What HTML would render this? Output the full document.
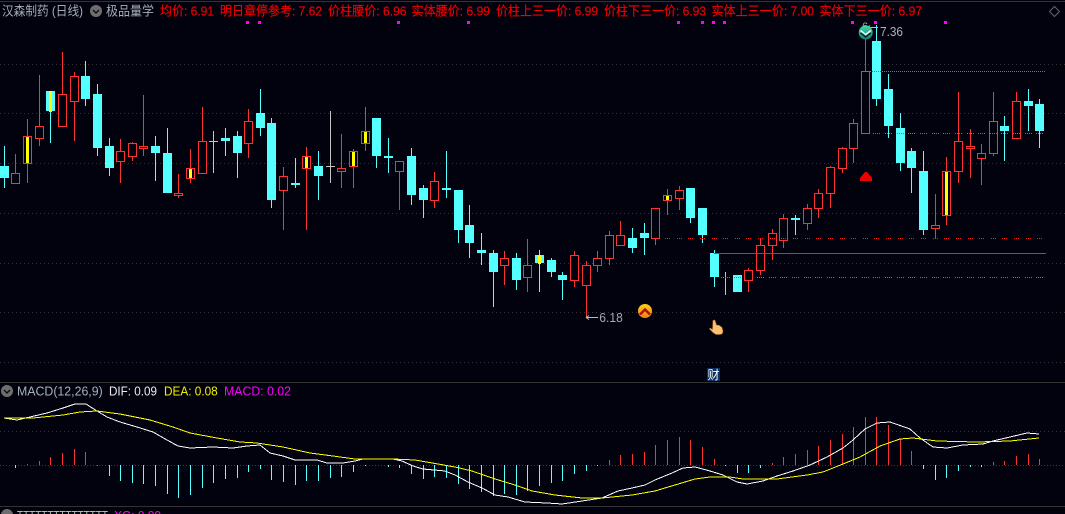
<!DOCTYPE html>
<html><head><meta charset="utf-8"><title>K</title>
<style>
html,body{margin:0;padding:0;background:#02020e;width:1065px;height:514px;overflow:hidden}
svg{display:block;position:absolute;left:0;top:0}
text{font-family:"Liberation Sans","Noto Sans CJK SC",sans-serif;font-size:13px}
</style></head><body>
<svg width="1065" height="514" viewBox="0 0 1065 514" xmlns="http://www.w3.org/2000/svg">
<defs>
<linearGradient id="gg" x1="0" y1="0" x2="0" y2="1"><stop offset="0" stop-color="#45d8a8"/><stop offset="1" stop-color="#15807c"/></linearGradient>
<linearGradient id="yy" x1="0" y1="0" x2="0" y2="1"><stop offset="0" stop-color="#fbd020"/><stop offset="1" stop-color="#f08010"/></linearGradient>
</defs>
<rect width="1065" height="514" fill="#02020e"/>
<g shape-rendering="crispEdges" fill="none">
<path d="M0 1.5H1065M0 382.5H1065M0 506.5H1065" stroke="#333"/>
<path d="M0 64.5H1065M0 113.5H1065M0 163.5H1065M0 213.5H1065M0 263.5H1065M0 312.5H1065M0 362.5H1065M0 431.5H1065" stroke="#343434" stroke-dasharray="1 3"/>
<!-- red wicks -->
<path stroke="#ff3232" d="M15.5 154V184M27.5 119V183M39.5 75V146M62.5 52V127M74.5 72V141M120.5 139V183M132.5 142V161M143.5 95V156M178.5 174V198M190.5 149V183M202.5 107V174M248.5 109V158M283.5 167V230M306.5 147V230M341.5 134V188M353.5 149V188M365.5 107V151M399.5 161V210M434.5 172V208M504.5 251V285M527.5 239V292M574.5 251V287M586.5 261V317M597.5 251V272M609.5 231V265M620.5 221V246M655.5 208V245M667.5 189V215M679.5 186V210M748.5 268V292M760.5 239V275M772.5 229V260M783.5 214V248M807.5 204V230M818.5 189V218M830.5 166V208M842.5 147V173M853.5 119V163M865.5 27V134M935.5 194V238M946.5 157V225M958.5 92V183M970.5 129V178M981.5 144V185M993.5 92V156M1016.5 92V139"/>
<!-- red bodies -->
<path stroke="#ff3232" fill="#02020e" d="M11.5 173.5h8v10h-8zM23.5 136.5h8v27h-8zM35.5 126.5h8v12h-8zM58.5 94.5h8v32h-8zM70.5 76.5h8v25h-8zM116.5 151.5h8v10h-8zM128.5 143.5h8v13h-8zM139.5 146.5h8v2h-8zM174.5 193.5h8v2h-8zM186.5 168.5h8v10h-8zM198.5 141.5h8v32h-8zM244.5 121.5h8v22h-8zM279.5 176.5h8v14h-8zM302.5 156.5h8v12h-8zM337.5 168.5h8v3h-8zM349.5 151.5h8v15h-8zM361.5 131.5h8v12h-8zM395.5 161.5h8v10h-8zM430.5 181.5h8v19h-8zM500.5 258.5h8v7h-8zM523.5 265.5h8v12h-8zM570.5 255.5h8v25h-8zM582.5 265.5h8v20h-8zM593.5 258.5h8v7h-8zM605.5 235.5h8v23h-8zM616.5 235.5h8v10h-8zM651.5 208.5h8v30h-8zM663.5 195.5h8v5h-8zM675.5 190.5h8v8h-8zM744.5 270.5h8v10h-8zM756.5 245.5h8v25h-8zM768.5 233.5h8v12h-8zM779.5 218.5h8v22h-8zM803.5 208.5h8v15h-8zM814.5 193.5h8v15h-8zM826.5 167.5h8v26h-8zM838.5 148.5h8v20h-8zM849.5 123.5h8v25h-8zM861.5 71.5h8v62h-8zM931.5 225.5h8v3h-8zM942.5 171.5h8v44h-8zM954.5 141.5h8v30h-8zM966.5 146.5h8v2h-8zM977.5 153.5h8v5h-8zM989.5 121.5h8v32h-8zM1012.5 101.5h8v37h-8z"/>
<!-- cyan wicks -->
<path stroke="#54ffff" d="M4.5 146V188M50.5 91V143M85.5 61V106M97.5 84V156M109.5 138V176M155.5 136V181M167.5 128V193M225.5 128V156M237.5 131V178M260.5 89V136M271.5 118V208M295.5 158V188M318.5 151V200M376.5 118V168M388.5 138V173M411.5 148V205M423.5 185V218M446.5 151V198M458.5 190V243M469.5 205V258M481.5 233V265M493.5 250V307M516.5 253V290M539.5 250V292M551.5 258V277M562.5 272V300M632.5 228V253M644.5 223V255M690.5 188V223M702.5 208V243M714.5 250V287M737.5 275V292M795.5 215V235M876.5 25V106M888.5 74V138M900.5 113V171M911.5 148V193M923.5 151V235M1004.5 116V161M1028.5 89V131M1039.5 99V148"/>
<!-- cyan bodies -->
<path fill="#54ffff" d="M0 166h9v12h-9zM46 91h9v20h-9zM81 76h9v23h-9zM93 94h9v54h-9zM105 146h9v22h-9zM151 146h9v7h-9zM163 153h9v40h-9zM221 138h9v3h-9zM233 136h9v17h-9zM256 113h9v15h-9zM267 123h9v77h-9zM291 183h9v2h-9zM314 166h9v10h-9zM372 118h9v38h-9zM384 156h9v2h-9zM407 156h9v39h-9zM419 188h9v12h-9zM442 188h9v2h-9zM454 190h9v40h-9zM465 225h9v18h-9zM477 250h9v3h-9zM489 253h9v19h-9zM512 258h9v22h-9zM535 255h9v8h-9zM547 260h9v12h-9zM558 275h9v5h-9zM628 238h9v10h-9zM640 233h9v5h-9zM686 188h9v30h-9zM698 208h9v27h-9zM710 253h9v24h-9zM733 275h9v17h-9zM791 218h9v2h-9zM872 41h9v58h-9zM884 89h9v37h-9zM896 128h9v35h-9zM907 151h9v17h-9zM919 171h9v59h-9zM1000 126h9v5h-9zM1024 101h9v5h-9zM1035 104h9v27h-9z"/>
<!-- gray doji -->
<path stroke="#c4c4c4" d="M213.5 131V173M209 141.5H218M330.5 111V183M326 166.5H335M725.5 272V295"/>
<!-- yellow -->
<path fill="#ffff00" d="M26 137h3v26h-3zM49 91h3v21h-3zM189 169h3v9h-3zM305 157h3v11h-3zM352 152h3v14h-3zM364 132h3v11h-3zM538 255h3v9h-3zM666 196h3v4h-3zM945 172h3v43h-3z"/>
<!-- overlay lines -->
<path stroke="#f020f0" stroke-dasharray="1 1" d="M866 71.5H1046"/>
<path stroke="#f020f0" stroke-dasharray="1 1" d="M873 133.500h7M885 133.500h7M897 133.500h7M908 133.500h7M920 133.500h7M932 133.500h7M943 133.500h7M955 133.500h7M967 133.500h7M978 133.500h7M990 133.500h7M1001 133.500h7M1013 133.500h7M1025 133.500h7M1036 133.500h7"/>
<path stroke="#ff2020" stroke-dasharray="1 1" d="M665 238.500h5M677 238.500h5M688 238.500h5M700 238.500h5M712 238.500h5M723 238.500h5M735 238.500h5M746 238.500h5M758 238.500h5M770 238.500h5M781 238.500h5M793 238.500h5M805 238.500h5M816 238.500h5M828 238.500h5M840 238.500h5M851 238.500h5M863 238.500h5M874 238.500h5M886 238.500h5M898 238.500h5M909 238.500h5M921 238.500h5M933 238.500h5M944 238.500h5M956 238.500h5M968 238.500h5M979 238.500h5M991 238.500h5M1002 238.500h5M1014 238.500h5M1026 238.500h5M1037 238.500h5"/>
<path stroke="#0e8080" d="M714 253.5H1046"/>
<path stroke="#12a0a0" stroke-dasharray="1 1" d="M721 277.500h9M734 277.500h7M757 277.500h7M769 277.500h7M780 277.500h7M792 277.500h7M804 277.500h7M815 277.500h7M827 277.500h7M839 277.500h7M850 277.500h7M862 277.500h7M873 277.500h7M885 277.500h7M897 277.500h7M908 277.500h7M920 277.500h7M932 277.500h7M943 277.500h7M955 277.500h7M967 277.500h7M978 277.500h7M990 277.500h7M1001 277.500h7M1013 277.500h7M1025 277.500h7M1036 277.500h7"/>
<!-- magenta squares -->
<path fill="#ff00ff" d="M246 21h3v3h-3zM258 21h3v3h-3zM397 21h3v3h-3zM467 21h3v3h-3zM677 21h3v3h-3zM701 21h3v3h-3zM712 21h3v3h-3zM723 21h3v3h-3zM851 21h3v3h-3zM874 21h3v3h-3zM944 21h3v3h-3z"/>
<!-- MACD zero -->
<path stroke="#3a3a3a" stroke-dasharray="1 2" d="M0 465.5H1065"/>
<!-- MACD hist red -->
<path stroke="#ff3232" d="M27.5 465V464M39.5 465V461M50.5 465V457M62.5 465V453M74.5 465V449M85.5 465V452M97.5 466V465M609.5 465V460M620.5 465V455M632.5 465V454M644.5 465V452M655.5 465V445M667.5 465V440M679.5 465V437M690.5 465V440M702.5 465V447M714.5 465V459M772.5 465V463M783.5 465V457M795.5 465V454M807.5 465V450M818.5 465V446M830.5 465V440M842.5 465V434M853.5 465V427M865.5 465V417M876.5 465V417M888.5 465V425M900.5 465V439M911.5 465V451M993.5 465V462M1004.5 465V461M1016.5 465V456M1028.5 465V454M1039.5 465V459"/>
<!-- MACD hist cyan -->
<path stroke="#54ffff" d="M15.5 465V468M109.5 465V476M120.5 465V481M132.5 465V483M143.5 465V484M155.5 465V486M167.5 465V494M178.5 465V498M190.5 465V495M202.5 465V488M213.5 465V483M225.5 465V479M237.5 465V478M248.5 465V472M260.5 465V469M271.5 465V480M283.5 465V482M295.5 465V485M306.5 465V481M318.5 465V481M330.5 465V478M341.5 465V477M353.5 465V472M365.5 465V466M388.5 465V467M399.5 465V468M411.5 465V474M423.5 465V479M434.5 465V477M446.5 465V478M458.5 465V484M469.5 465V489M481.5 465V492M493.5 465V496M504.5 465V494M516.5 465V495M527.5 465V491M539.5 465V486M551.5 465V483M562.5 465V481M574.5 465V474M586.5 465V471M597.5 465V466M725.5 465V466M737.5 465V473M748.5 465V473M760.5 465V468M923.5 465V469M935.5 465V480M946.5 465V478M958.5 465V471M970.5 465V467M981.5 465V467"/>
<!-- DIF -->
<polyline stroke="#ffffff" points="4,418 17,420 30,417 47,413 63,408 75,404 86,404 97,411 107,417 120,422 137,427 153,432 167,440 178,446 190,448 213,447 233,448 247,446 260,445 270,453 283,456 295,460 317,460 327,463 343,463 355,461 363,459 393,459 402,461 413,466 423,469 445,471 455,475 468,482 482,488 495,495 508,497 525,502 547,503 562,504 582,501 602,498 618,491 632,488 645,485 655,480 672,473 683,468 695,467 710,471 723,475 737,482 747,484 763,481 777,476 793,471 810,465 827,457 843,448 853,440 865,429 877,423 890,422 910,429 920,438 933,447 947,448 963,445 983,444 993,441 1010,437 1027,433 1039,434"/>
<!-- DEA -->
<polyline stroke="#ffff00" points="4,418 33,418 63,415 80,412 97,411 120,414 150,420 173,427 190,433 217,438 240,442 257,443 283,447 310,453 333,456 355,459 393,459 415,460 438,464 455,467 472,471 495,479 515,485 532,491 555,495 582,498 602,498 632,495 655,491 675,485 695,479 710,477 730,477 743,479 777,479 807,475 823,472 843,464 860,457 880,446 900,439 913,438 937,441 977,442 1010,441 1039,438"/>
</g>
<!-- top text -->
<text x="2" y="15.500" fill="#a4aeb8" textLength="81" lengthAdjust="spacingAndGlyphs">汉森制药 (日线)</text>
<circle cx="96" cy="11" r="6" fill="#6e6e6e"/><path d="M93 10l3 3 3-3" fill="none" stroke="#111" stroke-width="1.5"/>
<text x="106" y="15.500" fill="#a4aeb8" textLength="48" lengthAdjust="spacingAndGlyphs">极品量学</text>
<g fill="#f00000" stroke="#f00000" stroke-width=".15">
<text x="160" y="15.500" textLength="54" lengthAdjust="spacingAndGlyphs">均价: 6.91</text>
<text x="220" y="15.500" textLength="102" lengthAdjust="spacingAndGlyphs">明日章停参考: 7.62</text>
<text x="328" y="15.500" textLength="78.500" lengthAdjust="spacingAndGlyphs">价柱腰价: 6.96</text>
<text x="411.500" y="15.500" textLength="78.500" lengthAdjust="spacingAndGlyphs">实体腰价: 6.99</text>
<text x="496" y="15.500" textLength="102" lengthAdjust="spacingAndGlyphs">价柱上三一价: 6.99</text>
<text x="604" y="15.500" textLength="102" lengthAdjust="spacingAndGlyphs">价柱下三一价: 6.93</text>
<text x="711.500" y="15.500" textLength="102.500" lengthAdjust="spacingAndGlyphs">实体上三一价: 7.00</text>
<text x="819.500" y="15.500" textLength="102.500" lengthAdjust="spacingAndGlyphs">实体下三一价: 6.97</text>
</g>
<path d="M1054.500 6.500l5 5-5 5-5-5z" fill="none" stroke="#666"/>
<!-- high marker -->
<text x="862" y="30" fill="#aaa" style="font-size:11px">6</text>
<path d="M867 27.500H878M867 27.500l3-2M867 27.500l3 2" stroke="#bbb" fill="none"/>
<circle cx="865.700" cy="32.500" r="7" fill="url(#gg)"/>
<path d="M860.500 33l5.200 4 5.200-4" fill="none" stroke="#0a2a2a" stroke-width="1.500"/>
<path d="M860.500 30.500l5.200 4 5.200-4" fill="none" stroke="#dffff4" stroke-width="1.500"/>
<text x="880" y="36" fill="#a9b4be" textLength="23" lengthAdjust="spacingAndGlyphs">7.36</text>
<!-- low marker -->
<path d="M586 317.500H598M586 317.500l3-2M586 317.500l3 2" stroke="#bbb" fill="none"/>
<text x="599.300" y="322" fill="#a0acb8" textLength="23.500" lengthAdjust="spacingAndGlyphs">6.18</text>
<circle cx="645" cy="311" r="7" fill="url(#yy)"/>
<path d="M640 314.500l5-5 5 5" fill="none" stroke="#b01010" stroke-width="2.400"/>
<!-- red triangle -->
<path d="M860 181V178L865 172H867L872 178V181Z" fill="#f00000"/>
<!-- hand -->
<path d="M713 320.500l1.800-.5 1.700 5 3 .5 2.500 2 1 4-1 2.500-3 .5h-3l-3-2-3.500-3.500 .5-1 2.500 1.500z" fill="#fbc070" stroke="#b0702a" stroke-width=".6"/>
<!-- cai -->
<rect x="707" y="368" width="13" height="13" fill="#0c3060"/>
<text x="707.500" y="379" fill="#fff" style="font-size:12px">财</text>
<!-- MACD header -->
<circle cx="7" cy="391" r="6" fill="#6e6e6e"/><path d="M4 390l3 3 3-3" fill="none" stroke="#111" stroke-width="1.500"/>
<text x="17" y="395.500" fill="#a4b0bc" textLength="85.700" lengthAdjust="spacingAndGlyphs">MACD(12,26,9)</text>
<text x="109" y="395.500" fill="#ececec" textLength="48" lengthAdjust="spacingAndGlyphs">DIF: 0.09</text>
<text x="164" y="395.500" fill="#f0f000" textLength="53.700" lengthAdjust="spacingAndGlyphs">DEA: 0.08</text>
<text x="224" y="395.500" fill="#ff00ff" textLength="67" lengthAdjust="spacingAndGlyphs">MACD: 0.02</text>
<!-- bottom row -->
<circle cx="7" cy="515" r="6" fill="#6e6e6e"/>
<text x="17" y="520" fill="#a8c0b0" textLength="91" lengthAdjust="spacingAndGlyphs">TTTTTTTTTTTTTTT</text>
<text x="114" y="520" fill="#ff00ff" textLength="47" lengthAdjust="spacingAndGlyphs">XG: 0.00</text>
</svg>
</body></html>
